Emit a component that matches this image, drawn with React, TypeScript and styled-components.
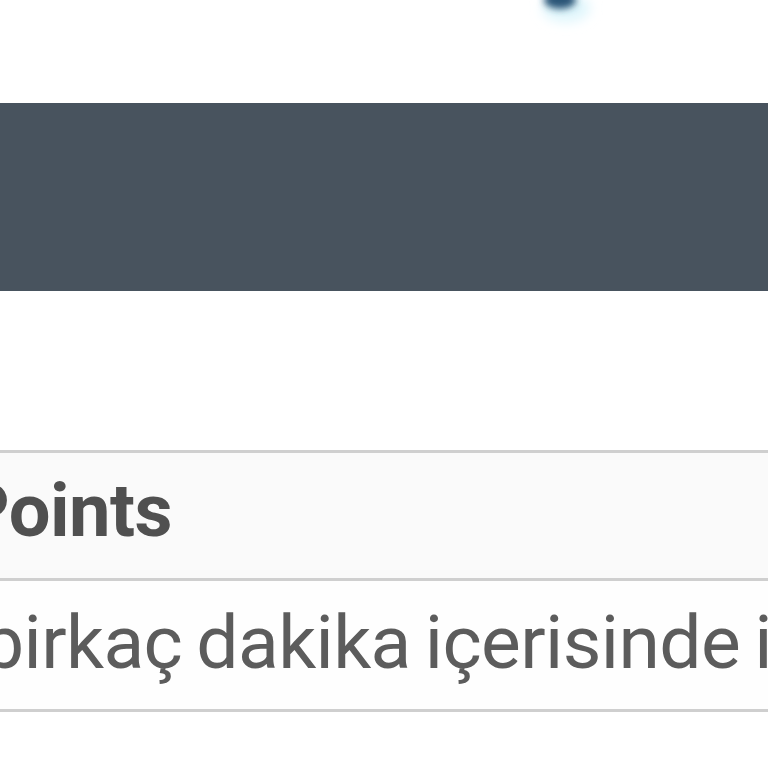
import React from "react";
import styled, { createGlobalStyle } from "styled-components";

const Global = createGlobalStyle`
  html, body { margin: 0; padding: 0; background: #ffffff; }
  body { font-family: Roboto, "Liberation Sans", Arial, sans-serif; overflow: hidden; }
`;

const Page = styled.div`
  width: 768px;
  height: 768px;
  overflow: hidden;
  display: flex;
  flex-direction: column;
`;

const TopArea = styled.div`
  height: 103px;
  flex-shrink: 0;
  display: flex;
  align-items: flex-start;
  padding-left: 526px;
`;

const Banner = styled.div`
  height: 188px;
  background: #48535e;
  flex-shrink: 0;
`;

const Gap = styled.div`
  height: 159px;
  flex-shrink: 0;
`;

const Table = styled.div`
  display: flex;
  flex-direction: column;
  border-top: 3px solid #cfcfcf;
`;

const Row = styled.div<{ $head?: boolean }>`
  height: ${(p) => (p.$head ? 125 : 128)}px;
  display: flex;
  align-items: center;
  background: ${(p) => (p.$head ? "#fafafa" : "#fefefe")};
  border-bottom: 3px solid #cfcfcf;
  white-space: nowrap;
  overflow: hidden;
`;

const Cell = styled.span<{ $head?: boolean; $shift: number }>`
  margin-left: ${(p) => p.$shift}px;
  margin-top: ${(p) => (p.$head ? -10 : -6)}px;
  font-size: ${(p) => (p.$head ? 74 : 75)}px;
  font-weight: ${(p) => (p.$head ? 700 : 400)};
  color: ${(p) => (p.$head ? "#505050" : "#5c5c5c")};
  letter-spacing: ${(p) => (p.$head ? "-0.5px" : "-0.6px")};
  word-spacing: ${(p) => (p.$head ? "0px" : "-4px")};
  flex-shrink: 0;
`;

export default function App() {
  return (
    <Page>
      <Global />
      <TopArea>
        <svg width="80" height="40" viewBox="0 0 80 40">
          <defs>
            <filter id="bl" x="-50%" y="-50%" width="200%" height="200%">
              <feGaussianBlur stdDeviation="6" />
            </filter>
            <filter id="bl2" x="-50%" y="-50%" width="200%" height="200%">
              <feGaussianBlur stdDeviation="3.5" />
            </filter>
          </defs>
          <ellipse cx="40" cy="8" rx="24" ry="14" fill="#dff6fc" filter="url(#bl)" />
          <ellipse cx="34" cy="0" rx="16" ry="9" fill="#2b5577" filter="url(#bl2)" />
        </svg>
      </TopArea>
      <Banner />
      <Gap />
      <Table>
        <Row $head>
          <Cell $head $shift={-38}>Points</Cell>
        </Row>
        <Row>
          <Cell $shift={-18}>birkaç dakika içerisinde ile</Cell>
        </Row>
      </Table>
    </Page>
  );
}
